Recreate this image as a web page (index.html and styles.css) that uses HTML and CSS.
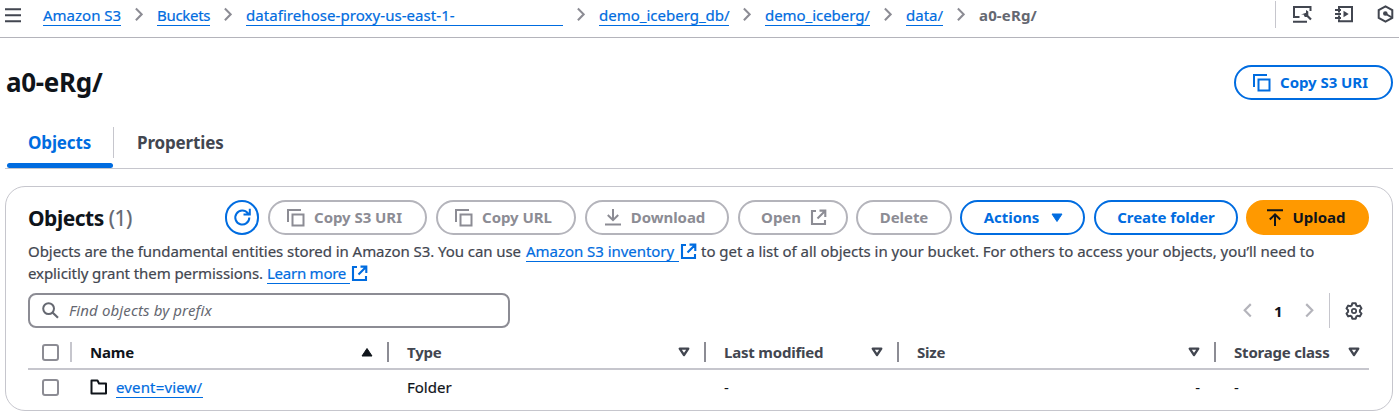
FILE: index.html
```html
<!DOCTYPE html>
<html lang="en">
<head>
<meta charset="utf-8">
<title>a0-eRg/ - S3 bucket</title>
<link rel="stylesheet" href="styles.css">
</head>
<body>
<svg class="defs" width="0" height="0">
  <symbol id="chev" viewBox="0 0 9 16"><path d="M1 1.2 7.5 7.8 1 14.4" fill="none" stroke="currentColor" stroke-width="2.3"/></symbol>
  <symbol id="copy" viewBox="0 0 18 18"><path d="M1 13V1h13M5.5 5.5h11v11h-11z" fill="none" stroke="currentColor" stroke-width="2"/></symbol>
  <symbol id="ext" viewBox="0 0 17 17"><path d="M6 2H2v13h13v-4M9.500 1.600h5.800V8M15 2 7.500 9.500" fill="none" stroke="currentColor" stroke-width="2.100"/></symbol>
  <symbol id="sort" viewBox="0 0 12 10"><path d="M1.700 1.700h8.600L6 8z" fill="none" stroke="currentColor" stroke-width="2.300" stroke-linejoin="round"/></symbol>
</svg>
<header class="topbar">
  <svg class="menu" viewBox="0 0 16 15"><path d="M0 1.200h16M0 7.200h16M0 13.200h16" stroke="currentColor" stroke-width="2"/></svg>
  <nav class="crumbs">
    <a class="c1">Amazon S3</a><svg class="chev"><use href="#chev"/></svg>
    <a class="c2">Buckets</a><svg class="chev"><use href="#chev"/></svg>
    <a class="c3">datafirehose-proxy-us-east-1-</a><svg class="chev"><use href="#chev"/></svg>
    <a class="c4">demo_iceberg_db/</a><svg class="chev"><use href="#chev"/></svg>
    <a class="c5">demo_iceberg/</a><svg class="chev"><use href="#chev"/></svg>
    <a class="c6">data/</a><svg class="chev"><use href="#chev"/></svg>
    <span class="current">a0-eRg/</span>
  </nav>
  <div class="tools">
    <svg width="20" height="18" viewBox="0 0 20 18"><path d="M6.500 12H1V2h16.500v4M0 16.700h14" fill="none" stroke="currentColor" stroke-width="2"/><path d="m12 8.500 6 6" stroke="currentColor" stroke-width="2.200"/><path d="M8 9.500h2.500L11.800 12h2l1.500-2V6.500L13 5v3l-2 .5z" fill="currentColor"/></svg>
    <svg width="18" height="18" viewBox="0 0 18 18"><path d="M4 4V2h13v14.300H4v-2M4 6v1.500M4 10.500V12M0 5h6M0 9h6M0 13h6" fill="none" stroke="currentColor" stroke-width="2"/><path d="M8.500 5.800v6.400l5.200-3.200z" fill="currentColor"/></svg>
    <svg width="17" height="18" viewBox="0 0 17 18"><path d="m8.500 1.300 6.800 3.700v8l-6.800 3.700L1.700 13V5z" fill="none" stroke="currentColor" stroke-width="2"/><circle cx="8.300" cy="8.500" r="2.300" fill="currentColor"/><path d="m8 8.500 7 4" stroke="currentColor" stroke-width="2"/></svg>
  </div>
</header>
<main>
  <div class="heading"><h1>a0-eRg/</h1><button class="btn w-uri"><svg class="copy"><use href="#copy"/></svg><span>Copy S3 URI</span></button></div>
  <div class="tabs"><div class="tab active"><span>Objects</span></div><div class="tab"><span class="props">Properties</span></div></div>
  <section class="card">
    <div class="cardhead">
      <h2>Objects <span>(1)</span></h2>
      <button class="btn refresh"><svg width="19" height="19" viewBox="0 0 19 19"><path d="M16.300 9.500A7 7 0 1 1 14.800 5.200l1.700 2M10.500 6.500h6.300V0.800" fill="none" stroke="currentColor" stroke-width="2"/></svg></button>
      <button class="btn off w-uri"><svg class="copy"><use href="#copy"/></svg><span>Copy S3 URI</span></button>
      <button class="btn off w-url"><svg class="copy"><use href="#copy"/></svg><span>Copy URL</span></button>
      <button class="btn off w-down"><svg width="16" height="17" viewBox="0 0 16 17"><path d="M8 0v11M2.800 6 8 11.200 13.200 6M0 15.500h16" fill="none" stroke="currentColor" stroke-width="2"/></svg><span>Download</span></button>
      <button class="btn off w-open"><span>Open</span><svg class="ext"><use href="#ext"/></svg></button>
      <button class="btn off w-del"><span>Delete</span></button>
      <button class="btn w-act"><span>Actions</span><svg width="12" height="10" viewBox="0 0 12 10"><path d="M1 1h10L6 8.500z" fill="currentColor" stroke="currentColor" stroke-linejoin="round"/></svg></button>
      <button class="btn w-create"><span>Create folder</span></button>
      <button class="btn upload"><svg width="16" height="17" viewBox="0 0 16 17"><path d="M0 1.300h16M8 17V6M2.800 10.500 8 5.300l5.200 5.200" fill="none" stroke="currentColor" stroke-width="2"/></svg><span>Upload</span></button>
    </div>
    <div class="desc">
      <div><span class="d1">Objects are the fundamental entities stored in Amazon S3. You can use</span><a class="inv">Amazon S3 inventory</a><svg class="ext"><use href="#ext"/></svg><span class="d2">to get a list of all objects in your bucket. For others to access your objects, you’ll need to</span></div>
      <div><span class="d3">explicitly grant them permissions.</span><a class="learn">Learn more</a><svg class="ext"><use href="#ext"/></svg></div>
    </div>
    <div class="filter">
      <div class="search"><svg width="17" height="17" viewBox="0 0 17 17"><circle cx="6.600" cy="6.600" r="5.400" fill="none" stroke="currentColor" stroke-width="2"/><path d="m10.500 10.500 5.500 5.200" stroke="currentColor" stroke-width="2.200"/></svg><span>Find objects by prefix</span></div>
      <div class="pager"><svg class="chev flip"><use href="#chev"/></svg><b>1</b><svg class="chev"><use href="#chev"/></svg></div>
      <div class="gear"><svg width="18" height="18" viewBox="0 0 18 18"><path d="M6.600 3.600 7.300 1.200h3.400l.7 2.400 1.100.6 2.300-.6 1.700 2.800L14.900 8.200v1.600l1.600 1.800-1.700 2.800-2.300-.6-1.100.6-.7 2.400H7.300l-.7-2.400-1.100-.6-2.300.6-1.700-2.800 1.600-1.800V8.200L1.500 6.400l1.700-2.800 2.300.6z" fill="none" stroke="currentColor" stroke-width="2" stroke-linejoin="round"/><circle cx="9" cy="9" r="2.200" fill="none" stroke="currentColor" stroke-width="1.700"/></svg></div>
    </div>
    <div class="row head">
      <div class="check"><i class="box"></i></div>
      <div class="dark"><span class="name">Name</span><svg class="sort" viewBox="0 0 12 10"><path d="M1 9h10L6 1.500z" fill="currentColor" stroke="currentColor" stroke-linejoin="round"/></svg></div>
      <div><span>Type</span><svg class="sort"><use href="#sort"/></svg></div>
      <div><span class="lm">Last modified</span><svg class="sort"><use href="#sort"/></svg></div>
      <div><span>Size</span><svg class="sort"><use href="#sort"/></svg></div>
      <div><span class="sc">Storage class</span><svg class="sort"><use href="#sort"/></svg></div>
    </div>
    <div class="row body">
      <div class="check"><i class="box"></i></div>
      <div><svg width="18" height="16" viewBox="0 0 18 16"><path d="M1.500 1.500h6l1.500 3h7v10H1.500z" fill="none" stroke="currentColor" stroke-width="2" stroke-linejoin="round"/></svg><a class="event">event=view/</a></div>
      <div><span class="folder">Folder</span></div>
      <div>-</div>
      <div class="right">-</div>
      <div>-</div>
    </div>
  </section>
</main>
</body>
</html>
```
FILE: styles.css
```css
* { box-sizing: border-box; }
body { margin: 0; height: 416px; overflow: hidden; background: #fff; color: #424650; font: 15px/22px "Noto Sans", sans-serif; white-space: nowrap; }
h1, h2 { margin: 0; color: #0f141a; }
svg { flex: none; display: block; }
.defs { position: absolute; }
a { color: #006ce0; border-bottom: 1px solid #006ce0; flex: none; }
a, .desc span, .folder { -webkit-text-stroke: .2px currentColor; }
.topbar { height: 38px; border-bottom: 1px solid #b4b4bb; display: flex; align-items: flex-start; padding-left: 5px; }
.menu { width: 16px; height: 15px; margin-top: 8px; }
.crumbs { display: flex; gap: 14px; margin-left: 22px; padding-top: 5px; }
.crumbs a { height: 21px; line-height: 21px; }
.crumbs .chev { margin-top: 2px; }
.chev { width: 8px; height: 15px; color: #8c8c94; }
.c1 { width: 78px; }
.c2 { width: 53px; letter-spacing: -.3px; }
.c3 { width: 317px; letter-spacing: .06px; }
.c4 { width: 130px; letter-spacing: 0; }
.c5 { width: 105px; letter-spacing: -.05px; }
.c6 { width: 37px; }
.current { color: #656871; font-weight: 700; line-height: 21px; letter-spacing: .15px; }
.tools { display: flex; gap: 22px; margin: 1px 5px 0 auto; padding: 4px 0 0 17px; height: 27px; border-left: 1px solid #c6c6cd; }
.tools svg:last-child { margin-left: 2px; }
main { padding: 0 6px 0 5px; }
.heading { height: 89px; padding-top: 27px; display: flex; align-items: flex-start; justify-content: space-between; }
h1 { font-size: 26px; line-height: 35px; padding-left: 1px; letter-spacing: -.3px; }
.btn { height: 35px; flex: none; border: 2px solid currentColor; border-radius: 18px; background: #fff; color: #006ce0; font: 700 15px/20px "Noto Sans", sans-serif; padding: 0; display: flex; align-items: center; justify-content: center; gap: 9px; letter-spacing: -.05px; }
.btn span { padding-bottom: 1px; }
.copy { width: 18px; height: 18px; }
.ext { width: 17px; height: 17px; }
.tabs { height: 42px; border-bottom: 1px solid #c6c6cd; display: flex; }
.tab { height: 31px; line-height: 31px; font-size: 17px; font-weight: 700; padding-left: 23px; letter-spacing: -.15px; }
.tab.active { width: 109px; border-right: 1px solid #c6c6cd; color: #006ce0; }
.tab.active::after { content: ""; display: block; width: 106px; height: 5px; border-radius: 3px; background: #006ce0; margin: 5px 0 0 -21px; }
.card { margin-top: 17px; height: 225px; border: 1px solid #c6c6cd; border-radius: 20px; padding: 13px 23px 0 22px; }
.cardhead { display: flex; gap: 9px; height: 35px; }
h2 { width: 188px; font-size: 21px; line-height: 36px; letter-spacing: -.5px; }
h2 span { font-weight: 400; color: #656871; -webkit-text-stroke: .2px currentColor; }
.btn.off { color: #8c8c94; border-color: #b4b4bb; }
.refresh { width: 34px; }
.w-uri { width: 159px; padding-right: 6px; }
.w-url { width: 140px; padding-right: 5px; }
.w-down { width: 144px; padding-right: 4px; gap: 10px; }
.w-open { width: 110px; padding-left: 2px; }
.w-del { width: 96px; margin-left: -1px; }
.w-act { width: 125px; margin-left: -1px; gap: 12px; padding-left: 2px; }
.w-create { width: 144px; }
.upload { width: 123px; margin-left: -1px; padding-right: 3px; gap: 10px; background: #f90; border-color: #f90; color: #0f141a; }
.desc { padding-top: 6px; }
.desc > div { display: flex; height: 22px; line-height: 20px; }
.desc a { height: 21px; }
.desc .ext { margin: 2px 4px 0 1px; color: #006ce0; }
.d1 { width: 498px; letter-spacing: -.06px; }
.d2 { letter-spacing: -.03px; }
.d3 { width: 239px; letter-spacing: -.08px; }
.inv { width: 153px; letter-spacing: -.04px; }
.learn { width: 83px; letter-spacing: -.25px; }
.filter { display: flex; padding-top: 8px; height: 51px; }
.search { width: 482px; height: 35px; border: 2px solid #8c8c94; border-radius: 8px; display: flex; align-items: center; gap: 10px; padding-left: 12px; color: #656871; font-style: italic; letter-spacing: .13px; }
.search span { padding-bottom: 2px; }
.pager { display: flex; width: 71px; margin-left: 733px; align-items: center; gap: 22px; height: 35px; color: #0f141a; }
.pager .chev { color: #b4b4bb; width: 9px; }
.flip { transform: scaleX(-1); }
.gear { height: 35px; border-left: 1px solid #c6c6cd; margin-left: 15px; padding: 9px 0 0 15px; }
.row { display: grid; grid-template-columns: 44px 317px 317px 193px 317px 1fr; align-items: center; }
.row > div { display: flex; align-items: center; justify-content: space-between; height: 20px; padding: 0 14px 0 18px; }
.row .check { padding: 0 0 0 14px; }
.head { height: 34px; border-bottom: 2px solid #c6c6cd; font-weight: 700; letter-spacing: -.2px; }
.head > div { border-right: 2px solid #8c8c94; }
.head .check { border-right-color: #c6c6cd; }
.head > div:last-child { border: 0; padding-right: 9px; }
.head .dark { color: #0f141a; }
.box { width: 17px; height: 17px; border: 2px solid #8c8c94; border-radius: 3px; }
.sort { width: 12px; height: 10px; }
.body { height: 34px; color: #0f141a; }
.row.body > div { justify-content: flex-start; }
.body a { height: 22px; line-height: 22px; margin-left: 8px; width: 87px; letter-spacing: .15px; }
.row.body .right { justify-content: flex-end; padding-right: 16px; }
```
